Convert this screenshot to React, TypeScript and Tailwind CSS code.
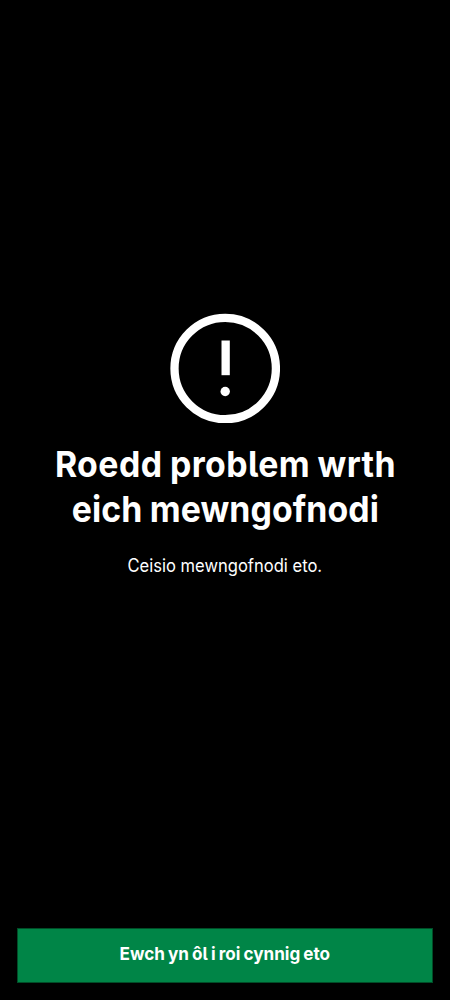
export default function App() {
  return (
    <main className="flex h-[1000px] w-[450px] flex-col bg-black px-[17px] pb-[17px] font-['Inter',sans-serif] text-white [font-feature-settings:'cv05']">
      <section className="flex flex-1 flex-col items-center pt-[313px]">
        <svg className="h-[110px] w-[110px]" viewBox="0 0 110 110" fill="none" aria-hidden="true">
          <circle cx="55.2" cy="55.5" r="50.7" stroke="white" strokeWidth="8.3" />
          <path d="M51.5 27.5h8.3v34.7h-8.3z" fill="white" />
          <circle cx="55.2" cy="78.5" r="4.7" fill="white" />
        </svg>
        <h1 className="mt-[19px] flex flex-col items-center text-[36px] leading-[45px] font-bold whitespace-nowrap">
          <span className="scale-x-[0.94] tracking-[0.45px] [word-spacing:-1px]">Roedd problem wrth</span>
          <span className="scale-x-[0.94] tracking-[0.1px] [word-spacing:-1px]">eich mewngofnodi</span>
        </h1>
        <p className="mt-[22px] scale-x-[0.92] text-[18px] leading-[24px] whitespace-nowrap">Ceisio mewngofnodi eto.</p>
      </section>
      <button className="h-[55px] w-full border border-[#004d27] bg-[#008547] pb-[5px] text-[18px] font-bold whitespace-nowrap">
        <span className="inline-block scale-x-[0.95] [word-spacing:-1px]">Ewch yn ôl i roi cynnig eto</span>
      </button>
    </main>
  );
}
